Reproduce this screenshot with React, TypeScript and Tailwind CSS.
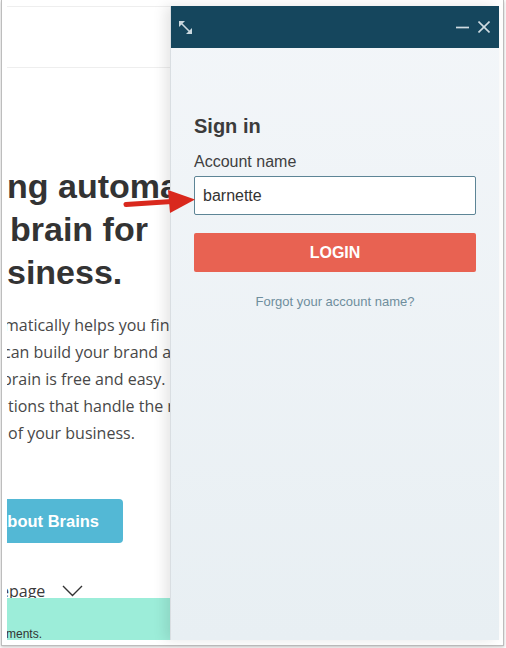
const sans = "font-['Liberation_Sans',Arial,sans-serif]";
const open = "font-['Open_Sans',sans-serif]";

function ExpandIcon() {
  return (
    <svg width="15" height="15" viewBox="0 0 15 15" className="text-[#c9d7de]">
      <line x1="3" y1="3" x2="12" y2="12" stroke="currentColor" strokeWidth="1.6" />
      <polygon points="1,1 7,1 1,7" fill="currentColor" />
      <polygon points="14,14 8,14 14,8" fill="currentColor" />
    </svg>
  );
}

function PageBehind() {
  return (
    <div className="flex-1 min-w-0 overflow-hidden bg-white flex flex-col">
      {/* top nav strip */}
      <div className="h-[62px] border-t border-b border-[#eeeeee] shrink-0" />

      {/* hero heading, clipped on both sides */}
      <div className={`${sans} mt-[97px] text-[34px] leading-[43px] font-bold text-[#333333] whitespace-nowrap`}>
        <div>ng automated</div>
        <div className="ml-[3px]">brain for</div>
        <div>siness.</div>
      </div>

      <div className={`${open} mt-[18px] text-[16px] leading-[27px] text-[#484848] whitespace-nowrap`}>
        <div className="ml-[-3px]">matically helps you find</div>
        <div className="ml-[-4px]">can build your brand and</div>
        <div className="ml-[-5px]">brain is free and easy. It</div>
        <div className="ml-[1px]">tions that handle the rest</div>
        <div className="ml-[1px]">of your business.</div>
      </div>

      <div className="mt-[52px] ml-[-40px] w-[156px] h-[44px] shrink-0 rounded-[4px] bg-[#53b8d5] flex items-center justify-end pr-[24px]">
        <span className={`${sans} text-[16.5px] font-bold text-white whitespace-nowrap`}>About Brains</span>
      </div>

      <div className="h-[55px] shrink-0 flex items-end">
        <span className={`${open} ml-[-7px] text-[16px] leading-[16px] mb-[-1px] text-[#3a3a3a]`}>epage</span>
        <svg width="21" height="12" viewBox="0 0 21 12" className="ml-[17px] mb-[1px]">
          <polyline points="1,1 10.5,10.5 20,1" fill="none" stroke="#333" strokeWidth="1.4" />
        </svg>
      </div>

      <div className="relative flex-1 bg-[#9cedd9] overflow-hidden">
        <div className={`${sans} ml-[-1px] pt-[30px] text-[12px] leading-[12px] text-[#333333]`}>ments.</div>
      </div>
    </div>
  );
}

function SignInPanel() {
  return (
    <div className="relative z-10 w-[329px] shrink-0 flex flex-col border-l border-[#d9dee2] shadow-[-5px_0_12px_rgba(0,0,0,0.10)] bg-linear-to-b from-[#f3f6f9] to-[#e8eff3]">
      <div className="h-[42px] shrink-0 bg-[#15465d] flex items-center pl-[7px] pr-[9px] text-[#d0dce2]">
        <ExpandIcon />
        <div className="ml-auto flex items-center gap-[9px]">
          <svg width="13" height="13" viewBox="0 0 13 13">
            <line x1="0" y1="6.5" x2="13" y2="6.5" stroke="currentColor" strokeWidth="1.7" />
          </svg>
          <svg width="12" height="12" viewBox="0 0 12 12">
            <line x1="0.5" y1="0.5" x2="11.5" y2="11.5" stroke="currentColor" strokeWidth="1.6" />
            <line x1="11.5" y1="0.5" x2="0.5" y2="11.5" stroke="currentColor" strokeWidth="1.6" />
          </svg>
        </div>
      </div>

      <div className={`${sans} pl-[23px] pr-[23px] pt-[66px] flex flex-col`}>
        <h2 className="text-[20px] leading-[24px] font-bold text-[#3b3b3b]">Sign in</h2>
        <label className="mt-[14px] text-[16px] leading-[20px] text-[#3f3f3f]">Account name</label>
        <div className="mt-[4px] h-[39px] bg-white border border-[#5d8596] rounded-[2px] flex items-center pl-[8px]">
          <span className="text-[16px] text-[#333333]">barnette</span>
        </div>
        <button className="mt-[18px] h-[39px] rounded-[2px] bg-[#e86252] text-white text-[16px] font-bold">
          LOGIN
        </button>
        <div className="mt-[22px] text-center text-[13px] leading-[16px] text-[#6f8e9d]">
          Forgot your account name?
        </div>
      </div>
    </div>
  );
}

export default function App() {
  return (
    <div className="w-[506px] h-[648px] bg-white pl-[1px]">
      <div className="w-[503px] h-[646px] border-x border-b border-[#bdbdbd] shadow-[0_1px_3px_rgba(0,0,0,0.25)] pl-[5px] pr-[4px] pt-[6px] pb-[5px] bg-white">
        <div className="relative h-[634px] flex">
          <PageBehind />
          <SignInPanel />

          {/* annotation arrow */}
          <svg width="80" height="35" viewBox="0 0 80 35" className="absolute left-[113px] top-[179px] z-20">
            <line x1="6" y1="19.5" x2="52" y2="16.5" stroke="#d9281d" strokeWidth="5" strokeLinecap="round" />
            <polygon points="48,5 75,14.5 50,28" fill="#d9281d" />
          </svg>
        </div>
      </div>
    </div>
  );
}
